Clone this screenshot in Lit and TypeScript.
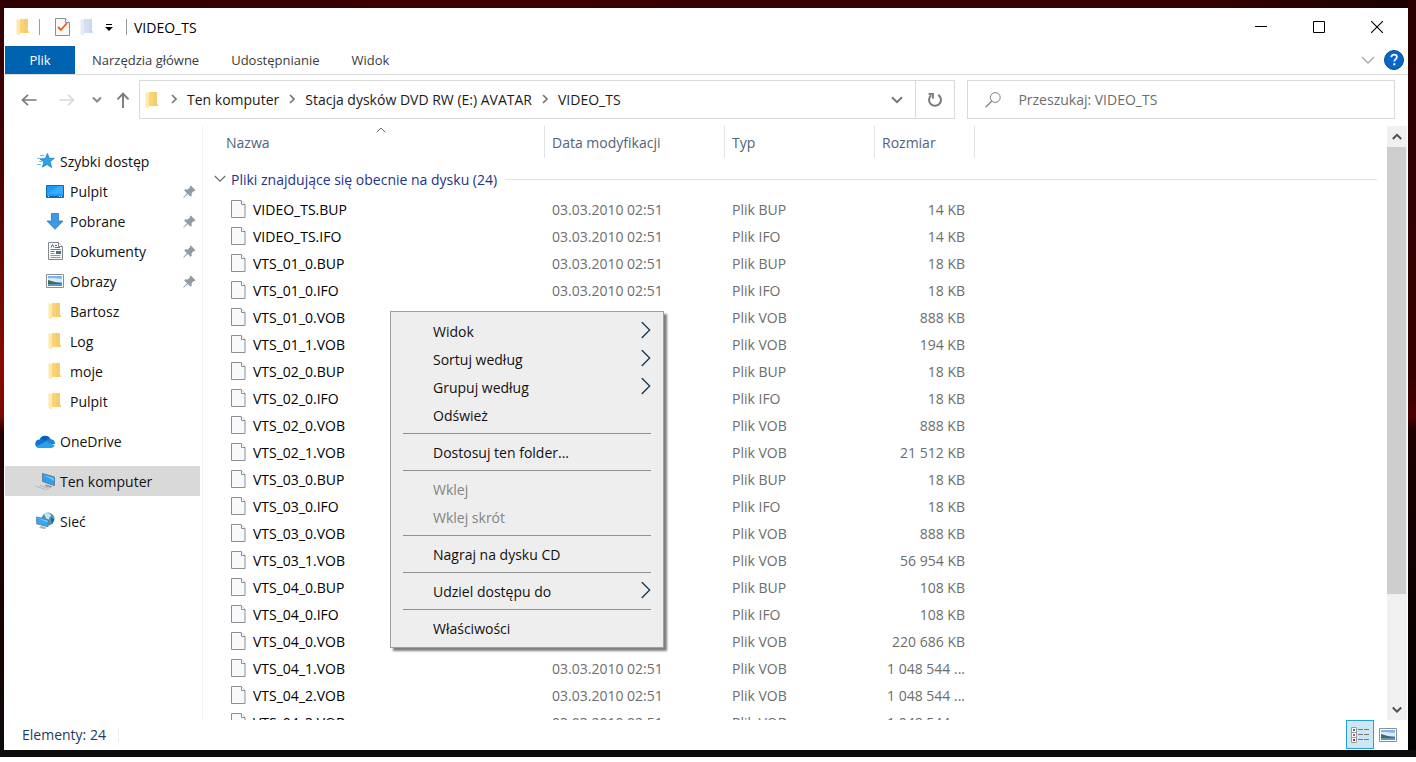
import { LitElement, html, css, svg, nothing } from "lit";
import { customElement, property } from "lit/decorators.js";
import { classMap } from "lit/directives/class-map.js";

interface FileRow {
  name: string;
  size: string;
}

interface MenuEntry {
  label?: string;
  submenu?: boolean;
  disabled?: boolean;
}

const DATE = "03.03.2010 02:51";

const FILES: FileRow[] = [
  { name: "VIDEO_TS.BUP", size: "14 KB" },
  { name: "VIDEO_TS.IFO", size: "14 KB" },
  { name: "VTS_01_0.BUP", size: "18 KB" },
  { name: "VTS_01_0.IFO", size: "18 KB" },
  { name: "VTS_01_0.VOB", size: "888 KB" },
  { name: "VTS_01_1.VOB", size: "194 KB" },
  { name: "VTS_02_0.BUP", size: "18 KB" },
  { name: "VTS_02_0.IFO", size: "18 KB" },
  { name: "VTS_02_0.VOB", size: "888 KB" },
  { name: "VTS_02_1.VOB", size: "21 512 KB" },
  { name: "VTS_03_0.BUP", size: "18 KB" },
  { name: "VTS_03_0.IFO", size: "18 KB" },
  { name: "VTS_03_0.VOB", size: "888 KB" },
  { name: "VTS_03_1.VOB", size: "56 954 KB" },
  { name: "VTS_04_0.BUP", size: "108 KB" },
  { name: "VTS_04_0.IFO", size: "108 KB" },
  { name: "VTS_04_0.VOB", size: "220 686 KB" },
  { name: "VTS_04_1.VOB", size: "1 048 544 ..." },
  { name: "VTS_04_2.VOB", size: "1 048 544 ..." },
  { name: "VTS_04_3.VOB", size: "1 048 544 ..." },
];

const MENU: MenuEntry[] = [
  { label: "Widok", submenu: true },
  { label: "Sortuj według", submenu: true },
  { label: "Grupuj według", submenu: true },
  { label: "Odśwież" },
  {},
  { label: "Dostosuj ten folder..." },
  {},
  { label: "Wklej", disabled: true },
  { label: "Wklej skrót", disabled: true },
  {},
  { label: "Nagraj na dysku CD" },
  {},
  { label: "Udziel dostępu do", submenu: true },
  {},
  { label: "Właściwości" },
];

const GLYPHS: Record<string, { w: number; h: number; body: unknown }> = {
  folder: {
    w: 14, h: 18,
    body: svg`<path d="M4 1h8v12h1v2H4z" fill="#f8d478"/><path d="M8 1h4v14H8z" fill="#f5cd6c"/><path d="M.5.8 4 2.2V17.5L.5 16z" fill="#fde9a9"/>`,
  },
  folderPale: {
    w: 14, h: 18,
    body: svg`<path d="M4 1h8v12h1v2H4z" fill="#d3dff1"/><path d="M9 1h3v14H9z" fill="#cad8ed"/><path d="M.5.8 4 2.2V17.5L.5 16z" fill="#e3ebf7"/>`,
  },
  check: {
    w: 15, h: 18,
    body: svg`<path d="M.5.5h10l4 4v13H.5z" fill="#f7f8f9" stroke="#8b8f93"/><path d="M10.5.5v4h4" fill="#fff" stroke="#8b8f93"/><path d="m3 9 3 3 6-7" fill="none" stroke="#ee5a17" stroke-width="1.8"/>`,
  },
  caret: { w: 8, h: 8, body: svg`<path d="M1 1h6v1H1z" fill="#000"/><path d="M0 4h8L4 8z" fill="#000"/>` },
  minimize: { w: 12, h: 12, body: svg`<path d="M0 5.500h12" stroke="#000"/>` },
  maximize: { w: 12, h: 12, body: svg`<path d="M.5.5h11v11H.5z" stroke="#000" fill="none"/>` },
  close: { w: 12, h: 12, body: svg`<path d="m0 0 12 12M12 0 0 12" stroke="#000" stroke-width="1.1"/>` },
  collapse: { w: 14, h: 8, body: svg`<path d="m1 1 6 6 6-6" stroke="#a8a8a8" stroke-width="1.3" fill="none"/>` },
  help: {
    w: 20, h: 20,
    body: svg`<circle cx="10" cy="10" r="9.5" fill="#0a66c6" stroke="#0a4a8c"/><path d="M7.300 7.300C7.300 5.500 8.500 4.700 10.100 4.700c1.700 0 2.800.9 2.800 2.300 0 2.100-2.600 2.200-2.600 4.600" stroke="#fff" stroke-width="1.7" fill="none"/><path d="M9.300 13.300h2v2h-2z" fill="#fff"/>`,
  },
  back: { w: 16, h: 14, body: svg`<path d="M15.500 7H1.500M7 1.800 1.500 7 7 12.200" stroke="#7a7a7a" stroke-width="1.7" fill="none"/>` },
  forward: { w: 16, h: 14, body: svg`<path d="M.5 7h14M9 1.800 14.500 7 9 12.200" stroke="#d9d9d9" stroke-width="1.7" fill="none"/>` },
  down: { w: 10, h: 8, body: svg`<path d="m1 1.500 4 4 4-4" stroke="#8a8a8a" stroke-width="2" fill="none"/>` },
  up: { w: 14, h: 16, body: svg`<path d="M7 16V1.500M1.500 7.300 7 1.600l5.500 5.700" stroke="#7a7a7a" stroke-width="1.9" fill="none"/>` },
  drop: { w: 12, h: 8, body: svg`<path d="m1 1.200 5 5 5-5" stroke="#777" stroke-width="2" fill="none"/>` },
  crumb: { w: 6, h: 12, body: svg`<path d="m1 1 4 4-4 4" stroke="#777" stroke-width="1.7" fill="none"/>` },
  refresh: {
    w: 16, h: 16,
    body: svg`<path d="M11.300 2.800A6 6 0 1 1 4.300 3.100" stroke="#7a7a7a" stroke-width="2" fill="none"/><path d="M1.500 1.800H6v5" stroke="#7a7a7a" stroke-width="1.8" fill="none"/>`,
  },
  search: { w: 16, h: 16, body: svg`<circle cx="10.3" cy="5.5" r="4.9" stroke="#7d7d88" fill="none"/><path d="M6.700 9.200.6 15.200" stroke="#7d7d88" stroke-width="1.2"/>` },
  sort: { w: 10, h: 6, body: svg`<path d="m.7 5.300 4.300-4.300 4.300 4.300" stroke="#6a6a6a" fill="none"/>` },
  group: { w: 12, h: 8, body: svg`<path d="m.8 1 5.200 5.200L11.200 1" stroke="#6a6a6a" stroke-width="1.2" fill="none"/>` },
  scrollUp: { w: 10, h: 8, body: svg`<path d="m.8 6 4.200-4.200L9.200 6" stroke="#505050" stroke-width="2" fill="none"/>` },
  scrollDown: { w: 10, h: 8, body: svg`<path d="m.8 1.500 4.200 4.200 4.200-4.200" stroke="#505050" stroke-width="2" fill="none"/>` },
  submenu: { w: 10, h: 18, body: svg`<path d="m.7 0 8 8-8 8" stroke="#12354f" stroke-width="1.3" fill="none"/>` },
  file: {
    w: 15, h: 20,
    body: svg`<path d="M.5.5h9.500l4 4v13H.5z" fill="#f7f9fa" stroke="#8b8e92"/><path d="M10.500.5v4h3.500" fill="#fff" stroke="#8b8e92"/>`,
  },
  star: {
    w: 19, h: 16,
    body: svg`<path d="m11.500.5 1.600 4.700 5.300.1-4.200 3.300 1.400 5.900-4.600-3.100-4.500 2.800 1.300-5.200L4 5.900l5.200-.4z" fill="#2aa3ee" stroke="#1272b8" stroke-width=".7"/><path d="M4 2.500h4M1 5.500h4M3 8.500h3M1 11.500h4" stroke="#4db2f0" stroke-width=".8"/>`,
  },
  desktop: {
    w: 18, h: 13,
    body: svg`<path d="M.5.5h17v12H.5z" fill="#1b9df5" stroke="#0a6bb5"/><path d="M1 9 13 1h4v8z" fill="#35adfb"/><path d="M1 11.500h16" stroke="#0c64a6"/><path d="M2 11.500h1M13 11.500h1M15 11.500h1" stroke="#d8efff"/>`,
  },
  download: { w: 18, h: 17, body: svg`<path d="M5.500.5h7v7.500h4.500L9 16.300 1 8h4.500z" fill="#3f98e4" stroke="#2a78c4" stroke-width=".8"/>` },
  document: {
    w: 15, h: 18,
    body: svg`<path d="M.5.5h10l4 4v13H.5z" fill="#fafafa" stroke="#82878c"/><path d="M10.500.5v4h4" fill="#fff" stroke="#82878c"/><path d="M3 5.500 4.500 2.500 6 5.500M7 3.500h2M7 5.500h5" stroke="#1f7fc4" fill="none"/><path d="M2.500 7.500h10M2.500 9.500h4" stroke="#2492d8"/><path d="M8 9h5v3H8z" fill="#47718f"/><path d="M2.500 11.500h4M2.500 13.500h10M2.500 15.500h10" stroke="#8e979e"/>`,
  },
  picture: {
    w: 18, h: 14,
    body: svg`<path d="M.5.5h17v13H.5z" fill="#fff" stroke="#8b8f93"/><path d="M2 2h14v10H2z" fill="#7db4f5"/><path d="M2 4.500c4-1.500 9 1 14 0V8H2z" fill="#d7ebf7"/><path d="M2 6 7 7.500l4 1 5 1V11H2z" fill="#3f6b57"/><path d="M2 10h14v2H2z" fill="#5b95bd"/>`,
  },
  cloud: {
    w: 20, h: 13,
    body: svg`<path d="M4.600 4.600A6 6 0 0 1 15.500 3.900L11 9z" fill="#0a5db4"/><path d="M4.500 13A4.300 4.300 0 0 1 4.600 4.400C7 3.700 9 5 11 6.600L9 13z" fill="#0f74d0"/><path d="M15.500 3.900a4.600 4.600 0 0 1 4.500 5L12 9l-2-3c2-2 3.500-2.200 5.500-2.100z" fill="#1a86dd"/><path d="M1.200 11.200 11 6.500l8.700 3.800A3.300 3.300 0 0 1 16.500 13h-12c-1.400 0-2.500-.7-3.300-1.800z" fill="#2aa1ea"/>`,
  },
  computer: {
    w: 20, h: 18,
    body: svg`<path d="m7.500 1.500 12 3.500v8.500l-12-4z" fill="#2f9ff0" stroke="#5b7f99"/><path d="m8.500 3 10.500 3v3z" fill="#6cc3fb"/><path d="m11 12.500-1.500 1.500 6 1.800 2-1.600" fill="#8f9aa2"/><path d="m.5 14 10 3.500 4-1M5 13.500l8 2.500" stroke="#b0b9bf" fill="none"/>`,
  },
  network: {
    w: 19, h: 18,
    body: svg`<circle cx="12" cy="7" r="6.5" fill="#4a93b5"/><path d="M8 2c3-2 6-1 7 1 0 2-2 2-2 4 0 1-3 1-3-1z" fill="#c5e3ea"/><path d="M15 6c2 0 3 1 3 2l-2 4z" fill="#23607f"/><path d="m.7 5 11.300 2.700v7L.7 11.800z" fill="#37a7f6" stroke="#557f9b" stroke-width=".9"/><path d="m1.500 6 10 2.400v2z" fill="#74c7fc"/><path d="m5 14 5 1.300-1 2-6-1.500z" fill="#aab3ba"/>`,
  },
  pin: {
    w: 13, h: 13,
    body: svg`<path d="M7.800.5 12.500 5.200 11.500 6.200 10.700 6 8.600 8.200 8.700 10.700 7.600 11.800 4.800 9 .8 12.800.2 12.200 4 8.200 1.200 5.400 2.300 4.300 4.800 4.500 7 2.300 6.800 1.500z" fill="#8f9ba6"/>`,
  },
  details: {
    w: 19, h: 17,
    body: svg`<g fill="#fff" stroke="#999"><path d="M.5 1.500h5v5h-5zM.5 6.500h5v5h-5zM.5 11.500h5v5h-5z"/></g><path d="M2 3h2v2H2z" fill="#3f7390"/><path d="M2 8h2v2H2z" fill="#7d6e78"/><path d="M2 13h2v2H2z" fill="#b02a20"/><path d="M7 3.500h5M13 3.500h5M7 8.500h5M13 8.500h5M7 13.500h5M13 13.500h5" stroke="#71777c"/>`,
  },
};

const glyph = (name: string) => {
  const g = GLYPHS[name];
  return html`<svg class="glyph" width=${g.w} height=${g.h} viewBox="0 0 ${g.w} ${g.h}" aria-hidden="true">${g.body}</svg>`;
};

const shared = css`
  :host, * { box-sizing: border-box; }
  button {
    font: inherit; color: inherit; background: none; border: 0; padding: 0; margin: 0;
    display: flex; align-items: center; justify-content: center;
  }
  .glyph { display: block; flex: none; }
`;

@customElement("title-bar")
class TitleBar extends LitElement {
  static styles = [shared, css`
    :host { display: flex; height: 38px; align-items: center; padding: 0 2px 0 11px; }
    .tool { width: 14px; margin-right: 11px; }
    .rule { width: 1px; height: 16px; background: #9b9b9b; }
    .first { margin-right: 15px; }
    .folder { margin-right: 10px; width: 13px; }
    .more { width: 8px; margin-right: 13px; }
    .name { flex: 1; padding-left: 7px; font-size: 14px; font-weight: 400; margin: 0; }
    .control { width: 58px; height: 38px; }
  `];
  render() {
    return html`
      <span class="folder">${glyph("folder")}</span>
      <span class="rule first"></span>
      <button class="tool" aria-label="Właściwości">${glyph("check")}</button>
      <button class="tool" aria-label="Nowy folder">${glyph("folderPale")}</button>
      <button class="more" aria-label="Dostosuj pasek">${glyph("caret")}</button>
      <span class="rule"></span>
      <h1 class="name">VIDEO_TS</h1>
      <button class="control" aria-label="Minimalizuj">${glyph("minimize")}</button>
      <button class="control" aria-label="Maksymalizuj">${glyph("maximize")}</button>
      <button class="control" aria-label="Zamknij">${glyph("close")}</button>
    `;
  }
}

@customElement("ribbon-tabs")
class RibbonTabs extends LitElement {
  static styles = [shared, css`
    :host { display: flex; height: 29px; border-bottom: 1px solid #dadbdc; font-size: 13px; color: #3b3b3b; padding-right: 4px; }
    .tab { padding: 0 16px; height: 28px; }
    .primary { width: 70px; padding: 0; margin-right: 1px; background: #0063b1; color: #fff; }
    .space { flex: 1; }
    .icon { height: 28px; margin-left: 9px; }
  `];
  render() {
    return html`
      <button class="tab primary">Plik</button>
      <button class="tab">Narzędzia główne</button>
      <button class="tab">Udostępnianie</button>
      <button class="tab">Widok</button>
      <span class="space"></span>
      <button class="icon" aria-label="Rozwiń wstążkę">${glyph("collapse")}</button>
      <button class="icon" aria-label="Pomoc">${glyph("help")}</button>
    `;
  }
}

@customElement("address-row")
class AddressRow extends LitElement {
  static styles = [shared, css`
    :host { display: flex; align-items: center; padding: 5px 13px 6px 5px; height: 50px; font-size: 14px; color: #1a1a1a; }
    .step { width: 38px; }
    .recent { width: 22px; }
    .parent { width: 30px; margin-right: 1px; }
    .box { border: 1px solid #d9d9d9; display: flex; height: 39px; align-items: center; min-width: 0; }
    .address { flex: 814; padding-left: 5px; margin-right: 12px; }
    .search { flex: 428; }
    .arrow { width: 26px; display: flex; justify-content: center; }
    .arrow.lead { margin-left: 2px; }
    .fill { flex: 1; }
    .open { width: 37px; height: 37px; }
    .refresh { width: 39px; height: 37px; border-left: 1px solid #d9d9d9; }
    .lens { width: 50px; display: flex; justify-content: center; }
    .query { flex: 1; min-width: 0; font: inherit; border: 0; padding: 0; outline: 0; background: none; color: #333; }
    .query::placeholder { color: #6d6d6d; opacity: 1; }
  `];
  render() {
    return html`
      <button class="step" aria-label="Wstecz">${glyph("back")}</button>
      <button class="step" aria-label="Dalej" disabled>${glyph("forward")}</button>
      <button class="recent" aria-label="Ostatnie lokalizacje">${glyph("down")}</button>
      <button class="parent" aria-label="W górę">${glyph("up")}</button>
      <nav class="box address" aria-label="Adres">
        ${glyph("folder")}
        <span class="arrow lead">${glyph("crumb")}</span>
        <button>Ten komputer</button>
        <span class="arrow">${glyph("crumb")}</span>
        <button>Stacja dysków DVD RW (E:) AVATAR</button>
        <span class="arrow">${glyph("crumb")}</span>
        <button>VIDEO_TS</button>
        <span class="fill"></span>
        <button class="open" aria-label="Poprzednie lokalizacje">${glyph("drop")}</button>
        <button class="refresh" aria-label="Odśwież">${glyph("refresh")}</button>
      </nav>
      <label class="box search">
        <span class="lens">${glyph("search")}</span>
        <input class="query" type="search" aria-label="Przeszukaj" placeholder="Przeszukaj: VIDEO_TS" />
      </label>
    `;
  }
}

@customElement("nav-item")
class NavItem extends LitElement {
  @property() icon = "folder";
  @property() label = "";
  @property({ type: Boolean }) child = false;
  @property({ type: Boolean }) pinned = false;
  @property({ type: Boolean }) active = false;
  static styles = [shared, css`
    :host { display: block; }
    .row {
      display: flex; align-items: center; height: 30px; width: 100%; padding: 0 4px 0 30px;
      font-size: 14px; color: #111; text-decoration: none;
    }
    .row.child { padding-left: 40px; }
    .row.active { background: #d9d9d9; }
    .icon { width: 20px; display: flex; justify-content: center; margin-right: 5px; }
    .label { flex: 1; }
  `];
  render() {
    return html`<a href="#" class=${classMap({ row: true, child: this.child, active: this.active })}>
      <span class="icon">${glyph(this.icon)}</span>
      <span class="label">${this.label}</span>
      ${this.pinned ? glyph("pin") : nothing}
    </a>`;
  }
}

@customElement("nav-tree")
class NavTree extends LitElement {
  static styles = [shared, css`
    :host { display: flex; flex-direction: column; gap: 10px; width: 195px; padding-top: 21px; flex: none; }
  `];
  render() {
    return html`
      <div>
        <nav-item icon="star" label="Szybki dostęp"></nav-item>
        <nav-item child pinned icon="desktop" label="Pulpit"></nav-item>
        <nav-item child pinned icon="download" label="Pobrane"></nav-item>
        <nav-item child pinned icon="document" label="Dokumenty"></nav-item>
        <nav-item child pinned icon="picture" label="Obrazy"></nav-item>
        <nav-item child label="Bartosz"></nav-item>
        <nav-item child label="Log"></nav-item>
        <nav-item child label="moje"></nav-item>
        <nav-item child label="Pulpit"></nav-item>
      </div>
      <nav-item icon="cloud" label="OneDrive"></nav-item>
      <nav-item active icon="computer" label="Ten komputer"></nav-item>
      <nav-item icon="network" label="Sieć"></nav-item>
    `;
  }
}

@customElement("file-list")
class FileList extends LitElement {
  static styles = [shared, css`
    :host { display: block; flex: 1; min-width: 0; overflow: hidden; padding: 1px 10px 0 0; font-size: 14px; }
    .files { width: 100%; table-layout: fixed; border-collapse: separate; border-spacing: 0; }
    .c-name { width: 342px; }
    .c-date { width: 180px; }
    .c-type { width: 150px; }
    .c-size { width: 100px; }
    th, td { padding: 0; text-align: left; font-weight: 400; white-space: nowrap; }
    thead th { height: 32px; color: #4f6478; border-right: 1px solid #e2e2e2; padding-left: 7px; }
    thead .name { padding-left: 23px; }
    thead .rest { border: 0; }
    .heading { display: block; position: relative; }
    .sort { position: absolute; top: -6px; left: calc(50% - 9px); }
    .group-cell { height: 38px; }
    .group { display: flex; align-items: center; width: 100%; color: #1e3287; padding: 4px 0 0 11px; gap: 5px; }
    .group-line { flex: 1; height: 1px; background: #e2e2e2; margin-left: 3px; }
    tbody td { height: 27px; color: #6d6d6d; padding-left: 7px; }
    tbody .file { padding-left: 28px; color: #000; }
    .entry { display: flex; align-items: center; gap: 7px; }
    tbody .size { text-align: right; padding: 0 10px 0 0; }
  `];
  render() {
    return html`<table class="files">
      <colgroup>
        <col class="c-name" /><col class="c-date" /><col class="c-type" /><col class="c-size" /><col />
      </colgroup>
      <thead>
        <tr>
          <th class="name"><span class="heading">Nazwa<span class="sort">${glyph("sort")}</span></span></th>
          <th>Data modyfikacji</th>
          <th>Typ</th>
          <th>Rozmiar</th>
          <th class="rest"></th>
        </tr>
      </thead>
      <tbody>
        <tr>
          <th class="group-cell" colspan="5">
            <button class="group">${glyph("group")}<span>Pliki znajdujące się obecnie na dysku (24)</span><span class="group-line"></span></button>
          </th>
        </tr>
        ${FILES.map((f) => html`<tr>
          <td class="file"><span class="entry">${glyph("file")}${f.name}</span></td>
          <td>${DATE}</td>
          <td>Plik ${f.name.slice(-3)}</td>
          <td class="size">${f.size}</td>
          <td></td>
        </tr>`)}
      </tbody>
    </table>`;
  }
}

@customElement("scroll-track")
class ScrollTrack extends LitElement {
  static styles = [shared, css`
    :host { display: flex; flex-direction: column; width: 20px; background: #f0f0f0; margin: 1px 1px 0 0; flex: none; }
    .end { height: 21px; width: 19px; }
    .track { flex: 1; }
    .thumb { width: 19px; height: 81%; background: #cdcdcd; }
  `];
  render() {
    return html`
      <button class="end" aria-label="Przewiń w górę">${glyph("scrollUp")}</button>
      <div class="track"><div class="thumb"></div></div>
      <button class="end" aria-label="Przewiń w dół">${glyph("scrollDown")}</button>
    `;
  }
}

@customElement("context-menu")
class ContextMenu extends LitElement {
  static styles = [shared, css`
    :host {
      display: block; width: 274px; padding: 5px 12px; background: #eee;
      border: 1px solid #a0a0a0; box-shadow: 3px 3px 2px rgba(0, 0, 0, 0.5); font-size: 14px; color: #111;
    }
    .entry { width: 100%; height: 28px; padding-left: 30px; justify-content: space-between; }
    .entry:disabled { color: #838383; }
    .separator { border: 0; height: 1px; background: #919191; margin: 4px 0; }
  `];
  render() {
    return MENU.map((m) => m.label
      ? html`<button class="entry" role="menuitem" ?disabled=${m.disabled}>${m.label}${m.submenu ? glyph("submenu") : nothing}</button>`
      : html`<hr class="separator" />`);
  }
}

@customElement("status-bar")
class StatusBar extends LitElement {
  static styles = [shared, css`
    :host { display: flex; height: 30px; flex: none; align-items: center; padding: 0 6px 0 17px; font-size: 14px; color: #1f3a5f; }
    .count { padding-right: 12px; border-right: 1px solid #ececec; line-height: 14px; }
    .space { flex: 1; }
    .mode { width: 28px; height: 29px; align-self: flex-start; }
    .selected { background: #cce8f6; border: 1px solid #26a0da; }
  `];
  render() {
    return html`
      <span class="count">Elementy: 24</span>
      <span class="space"></span>
      <button class="mode selected" aria-label="Szczegóły">${glyph("details")}</button>
      <button class="mode" aria-label="Duże ikony">${glyph("picture")}</button>
    `;
  }
}

@customElement("app-root")
class AppRoot extends LitElement {
  static styles = css`
    :host {
      display: block; height: 100vh; box-sizing: border-box; padding-bottom: 5px; background: #fff;
      font-family: "Open Sans", "Noto Sans", sans-serif;
    }
    .desktop {
      box-sizing: border-box; height: 100%; display: flex; padding: 8px 8px 7px 4px;
      background:
        linear-gradient(#0b0b0b, #0b0b0b) bottom / 100% 7px no-repeat,
        linear-gradient(#300000, #450000 20%, #8a0a00 48%, #7c0800 55%, #260000 57%, #180300 85%, #0b0b0b) left / 4px 100% no-repeat,
        linear-gradient(#2a0000, #360000 50%, #4c0000 55%, #1c0000 57%, #0a0000 85%, #000) right / 8px 100% no-repeat,
        linear-gradient(90deg, #300000, #3c0000 30%, #350000 85%, #1c0000);
    }
    .window { position: relative; flex: 1; min-width: 0; display: flex; flex-direction: column; background: #fff; padding-left: 1px; }
    .content { flex: 1; min-height: 0; display: flex; }
    .divider { width: 1px; margin: 1px 0 0 2px; background: #f2f2f2; }
    .menu { position: absolute; left: 386px; top: 303px; }
  `;
  render() {
    return html`<div class="desktop">
      <main class="window">
        <title-bar></title-bar>
        <ribbon-tabs></ribbon-tabs>
        <address-row></address-row>
        <div class="content">
          <nav-tree></nav-tree>
          <span class="divider"></span>
          <file-list></file-list>
          <scroll-track></scroll-track>
        </div>
        <status-bar></status-bar>
        <context-menu class="menu" role="menu"></context-menu>
      </main>
    </div>`;
  }
}
